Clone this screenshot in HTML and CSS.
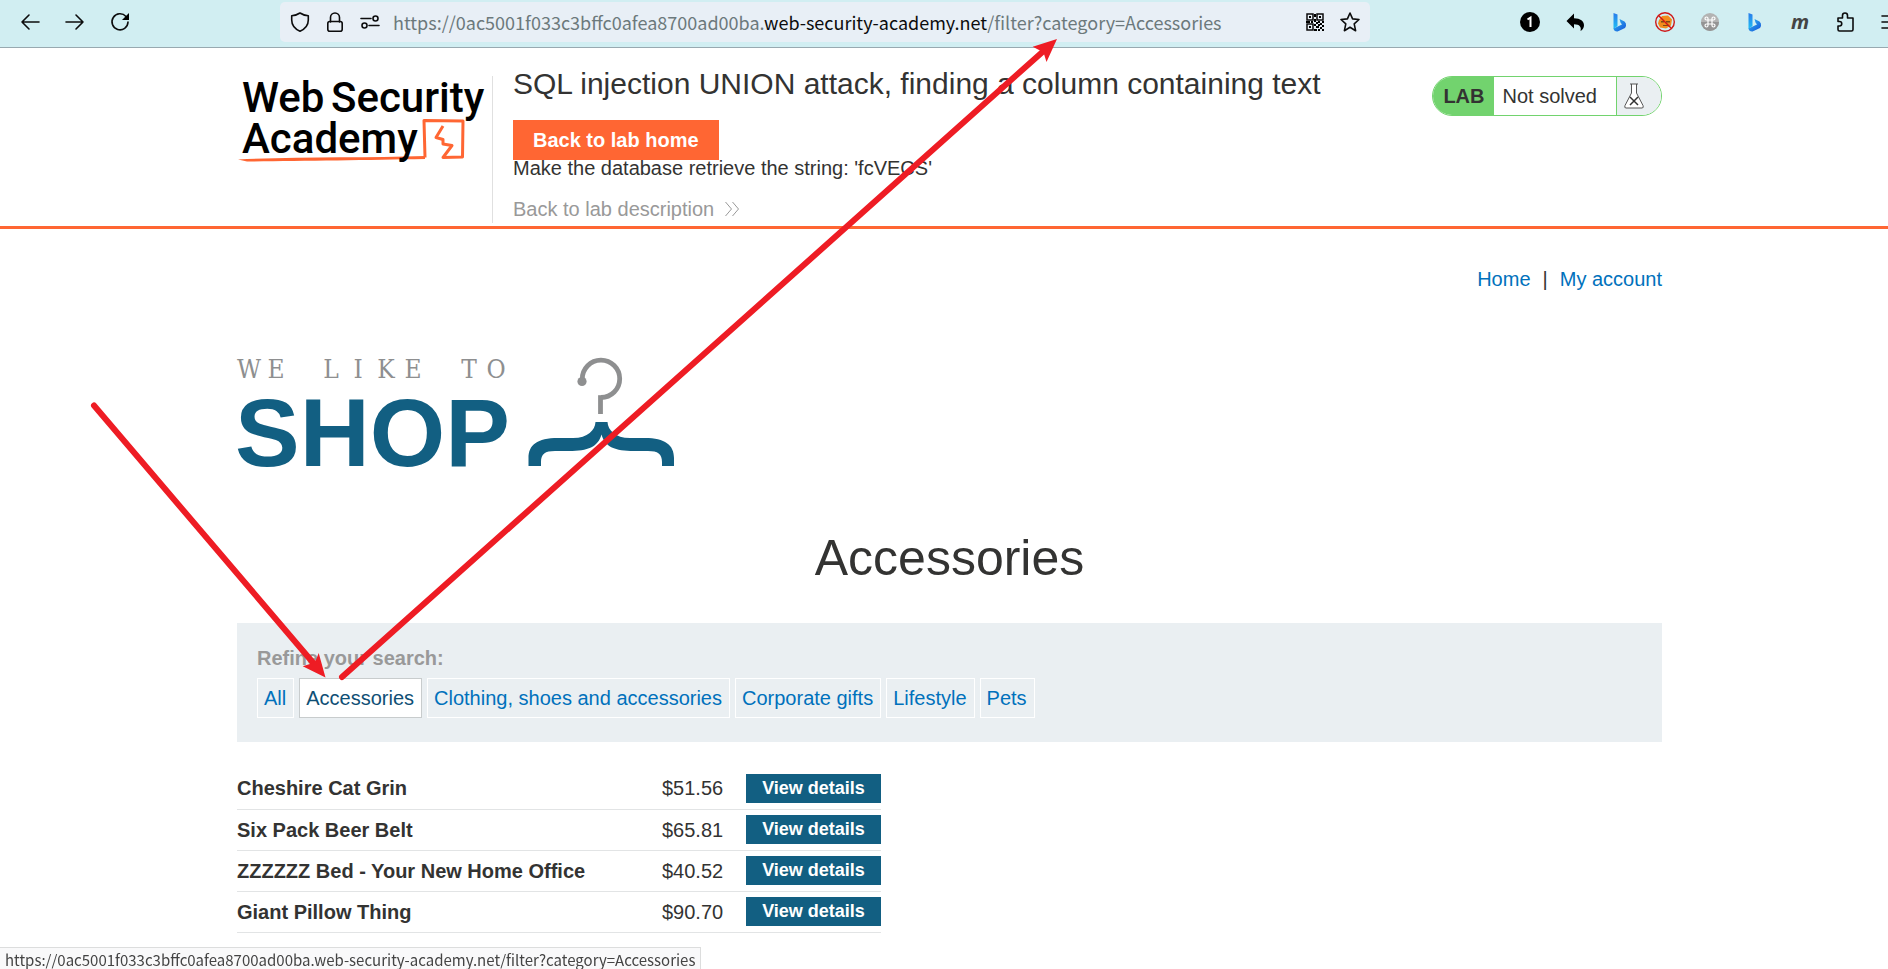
FILE: index.html
```html
<!DOCTYPE html>
<html lang="en">
<head>
<meta charset="utf-8">
<title>SQL injection UNION attack, finding a column containing text</title>
<link rel="stylesheet" href="styles.css">
</head>
<body>
<div class="toolbar">
  <div class="toolbar-nav">
    <button class="icon-button" type="button" aria-label="Back"><svg viewBox="0 0 20 20"><path class="line" d="M19 10H2M9 3L2 10l7 7"/></svg></button>
    <button class="icon-button" type="button" aria-label="Forward"><svg viewBox="0 0 20 20"><path class="line" d="M1 10h17M11 3l7 7-7 7"/></svg></button>
    <button class="icon-button" type="button" aria-label="Reload"><svg viewBox="0 0 20 20"><path class="line" d="M16 4.500A8 8 0 1 0 18 10"/><path d="M19 1v7h-7z"/></svg></button>
  </div>
  <div class="urlbar">
    <svg class="icon" viewBox="0 0 20 20"><path class="line" d="M10 1C12.500 2.700 15 3.600 18.300 3.800V8c0 5-3.300 9-8.300 11.200C5 17 1.700 13 1.700 8V3.800C5 3.600 7.500 2.700 10 1z"/></svg>
    <svg class="icon" viewBox="0 0 20 20"><path class="line" d="M5.500 10V5.500a4.500 4.500 0 0 1 9 0V10"/><rect class="line" x="2.800" y="9.500" width="14.400" height="9.700" rx="2"/></svg>
    <svg class="icon" viewBox="0 0 20 20"><path class="line" d="M1 6.500h10M9 13.500h10"/><circle class="line" cx="15.500" cy="6.500" r="2.500"/><circle class="line" cx="4.500" cy="13.500" r="2.500"/></svg>
    <div class="url" role="textbox" aria-label="Address" tabindex="0">https://0ac5001f033c3bffc0afea8700ad00ba.<span class="url-domain">web-security-academy.net</span>/filter?category=Accessories</div>
    <button class="icon-button" type="button" aria-label="QR code"><svg viewBox="0 0 20 20"><path class="qr" d="M2 2h6v6H2zM12 2h6v6h-6zM2 12h6v6H2z"/><path d="M4 4h2v2H4zM14 4h2v2h-2zM4 14h2v2H4zM9 2h2v3H9zM9 7h2v3H9zM1 9h4v2H1zM6 9h2v2H6zM13 9h2v2h-2zM17 9h2v2h-2zM9 12h2v2H9zM11 10h2v2h-2zM15 11h2v2h-2zM11 14h3v2h-3zM13 12h2v2h-2zM9 17h3v2H9zM15 15h2v2h-2zM17 13h2v2h-2zM13 17h2v2h-2zM17 17h2v2h-2z"/></svg></button>
    <button class="icon-button" type="button" aria-label="Bookmark this page"><svg viewBox="0 0 20 20"><path class="line" d="M10 1l2.600 5.900 6.400.600-4.800 4.400 1.400 6.800L10 15.300l-5.600 3.400 1.400-6.800L1 7.500l6.400-.600z"/></svg></button>
  </div>
  <div class="toolbar-extensions">
    <button class="icon-button" type="button" aria-label="Notifications"><svg viewBox="0 0 20 20"><circle cx="10" cy="10" r="10"/><path class="knockout" d="M7.500 7.500L10.500 5.500V15"/></svg></button>
    <button class="icon-button" type="button" aria-label="Undo"><svg viewBox="0 0 20 20"><path d="M9 1.500v4.700c6.500 0 10 3 10 7 0 2.300-1.200 4.400-3.500 5.800 1.200-4-.800-6.800-6.500-6.800v4.300L1.500 9z"/></svg></button>
    <button class="icon-button" type="button" aria-label="Bing"><svg viewBox="0 0 20 20"><use href="#bing"/></svg></button>
    <button class="icon-button" type="button" aria-label="Blocker"><svg viewBox="0 0 20 20"><path fill="#f28c1c" d="M4 8l3-4 6-.500 4 4-1 6-5 3-6-1-2-4z"/><path fill="#7a4b18" d="M6 9h3v1.500H6zM11 9h4v1.500h-4zM8 13h5v1H8z"/><circle class="forbid" cx="10" cy="10" r="9.300"/><path class="forbid" d="M3.500 3.500l13 13"/></svg></button>
    <button class="icon-button" type="button" aria-label="Shortcuts"><svg viewBox="0 0 20 20"><circle cx="10" cy="10" r="9" fill="#b3b3b3"/><path fill="#949494" d="M1 10a9 9 0 0 0 18 0z"/><path class="command" d="M8 8h4v4H8zM8 8H6.500A1.500 1.500 0 1 1 8 6.500zM12 8V6.500A1.500 1.500 0 1 1 13.500 8zM8 12v1.500A1.500 1.500 0 1 1 6.500 12zM12 12h1.500a1.500 1.500 0 1 1-1.500 1.500z"/></svg></button>
    <button class="icon-button" type="button" aria-label="Bing chat"><svg viewBox="0 0 20 20"><use href="#bing"/></svg></button>
    <button class="icon-button letter-m" type="button">m</button>
    <button class="icon-button" type="button" aria-label="Extensions"><svg viewBox="0 0 20 20"><path class="line" d="M3 6h4.500V3.500a2.500 2.500 0 0 1 5 0V6H18v11.500a1.500 1.500 0 0 1-1.500 1.500h-12A1.500 1.500 0 0 1 3 17.500V14h1.500a2 2 0 0 0 0-4.500H3z"/></svg></button>
    <button class="icon-button" type="button" aria-label="Menu"><svg viewBox="0 0 20 20"><path class="line" d="M2 4h16M2 10h16M2 16h16"/></svg></button>
  </div>
</div>

<header class="lab-header">
  <div class="container lab-row">
    <a class="academy" href="#" aria-label="Web Security Academy">
      <svg class="academy-logo" viewBox="0 0 250 90">
        <path class="scribble-fill" d="M1 83.500C60 80.500 130 82 188 80V83C130 84 60 85 10 85.500z"/>
        <path class="scribble" d="M188 81.500L187 44.500 226 45 225.500 81 206 81.500 215 69.500 206 68V63.500L199 61.500 206 50"/>
        <text class="academy-text" x="5" y="36">Web</text>
        <text class="academy-text" x="94" y="36">Security</text>
        <text class="academy-text" x="5" y="77">Academy</text>
      </svg>
    </a>
    <div class="lab-info">
      <h2 class="lab-title">SQL injection UNION attack, finding a column containing text</h2>
      <a class="lab-button" href="#">Back to lab home</a>
      <p class="lab-hint">Make the database retrieve the string: 'fcVECS'</p>
      <a class="lab-back" href="#">Back to lab description
        <svg class="chevrons" viewBox="0 0 16 16"><path d="M1.500 1l6 7-6 7M8.500 1l6 7-6 7"/></svg>
      </a>
    </div>
    <div class="lab-status">
      <span class="status-tag">LAB</span>
      <span class="status-text">Not solved</span>
      <span class="status-icon"><svg class="flask" viewBox="0 0 20 26"><path class="flask-body" d="M6 1h8M7.500 1v9L1 22.500q-1 2.500 1 2.500h16q2 0 1-2.500L12.500 10V1"/><path class="flask-x" d="M6 14l8 8M14 14l-8 8"/></svg></span>
    </div>
  </div>
</header>

<main class="shop">
  <div class="container">
    <nav class="top-links">
      <a href="#">Home</a><span>|</span><a href="#">My account</a>
    </nav>
    <svg class="shop-logo" viewBox="0 0 440 120" role="img" aria-label="We like to shop">
      <text class="tagline" x="12 39 94 121 149 176 232 259" y="28">WELIKETO</text>
      <text class="shop-word" x="-2" y="116">SHOP</text>
      <path class="hook" d="M345.300 29A18.700 18.700 0 1 1 364 47.500"/>
      <path class="hook" d="M363.500 45.200V64"/>
      <circle class="hook-ball" cx="345" cy="31.500" r="4.600"/>
      <path class="hanger" d="M358.500 72H370.500C371 80 378 88 393 88H408C428 88 437 95 437 108V116H425V112C425 104 421 101 411 101H397C378 101 368 97 364.500 84.500C361 97 351 101 332 101H318C308 101 304 104 304 112V116H291.500V108C291.500 95 300 88 321 88H336C351 88 358 80 358.500 72Z"/>
    </svg>
    <h1 class="category">Accessories</h1>
    <section class="filters">
      <p class="filters-label">Refine your search:</p>
      <div class="chips">
        <a class="chip" href="#">All</a>
        <a class="chip chip-active" href="#">Accessories</a>
        <a class="chip" href="#">Clothing, shoes and accessories</a>
        <a class="chip" href="#">Corporate gifts</a>
        <a class="chip" href="#">Lifestyle</a>
        <a class="chip" href="#">Pets</a>
      </div>
    </section>
    <table class="products">
      <tbody>
        <tr><th scope="row">Cheshire Cat Grin</th><td class="price">$51.56</td><td class="action"><a class="details" href="#">View details</a></td></tr>
        <tr><th scope="row">Six Pack Beer Belt</th><td class="price">$65.81</td><td class="action"><a class="details" href="#">View details</a></td></tr>
        <tr><th scope="row">ZZZZZZ Bed - Your New Home Office</th><td class="price">$40.52</td><td class="action"><a class="details" href="#">View details</a></td></tr>
        <tr><th scope="row">Giant Pillow Thing</th><td class="price">$90.70</td><td class="action"><a class="details" href="#">View details</a></td></tr>
      </tbody>
    </table>
  </div>
</main>

<div class="link-preview">https://0ac5001f033c3bffc0afea8700ad00ba.web-security-academy.net/filter?category=Accessories</div>

<svg class="annotations" aria-hidden="true">
  <path class="arrow" d="M94 405.500L315 665M342 677L1043 51.500"/>
  <path class="arrow-head" d="M325.500 677.500L302.700 666.300 311.500 663.500 316 660 318.700 653z"/>
  <path class="arrow-head" d="M1057 39L1032.700 46.700 1040 50.500 1044 54 1046.500 62z"/>
</svg>

<svg class="symbols" aria-hidden="true">
  <defs>
    <linearGradient id="bing-blue" x1="0" y1="0" x2="0" y2="1"><stop offset="0" stop-color="#2a7bea"/><stop offset="1" stop-color="#1fc0f5"/></linearGradient>
    <linearGradient id="bing-deep" x1="0" y1="0" x2="1" y2="1"><stop offset="0" stop-color="#32bdf4"/><stop offset="1" stop-color="#1450d8"/></linearGradient>
    <symbol id="bing" viewBox="0 0 20 20"><path fill="url(#bing-blue)" d="M3.500 1l4 1.500v11.500L3.500 17z"/><path fill="url(#bing-deep)" d="M9.500 7l5 2.500q2 1.500 1.500 4.500l-1 2-7.500 3.500q-3.500.200-4-3L12 12.500l-1.500-2z"/></symbol>
  </defs>
</svg>
</body>
</html>
```

FILE: styles.css
```css
* { box-sizing: border-box; }

body {
  position: relative;
  min-height: 100vh;
  margin: 0;
  overflow-x: hidden;
  background: #fff;
  color: #333332;
  font: 20px/24px "Liberation Sans", Arial, sans-serif;
}

a { color: #0071bc; text-decoration: none; }
h1, h2, p { margin: 0; font-weight: normal; }

/* Browser toolbar */
.toolbar {
  display: flex;
  align-items: flex-start;
  height: 48px;
  padding-top: 2px;
  overflow: hidden;
  background: #d1eef2;
  border-bottom: 1px solid #98a9b0;
}
.toolbar-nav { display: flex; align-items: center; gap: 25px; flex: 0 0 280px; height: 40px; padding-left: 20px; }
.urlbar {
  display: flex;
  align-items: center;
  gap: 15px;
  flex: 1;
  min-width: 0;
  height: 40px;
  padding: 0 10px;
  background: #e8eff6;
  border-radius: 5px;
}
.url {
  flex: 1;
  min-width: 0;
  margin-left: -2px;
  overflow: hidden;
  color: #6c797c;
  font: 18px/24px "Noto Sans CJK SC", "Open Sans", sans-serif;
  white-space: nowrap;
}
.url-domain { color: #0c0c0d; }
.toolbar-extensions { display: flex; align-items: center; gap: 25px; flex: 0 0 518px; height: 40px; padding-left: 150px; overflow: hidden; }
.icon-button { flex: none; width: 20px; height: 20px; padding: 0; background: none; border: 0; color: #0c0c0d; }
.icon, .icon-button svg { display: block; flex: none; width: 20px; height: 20px; }
.line { fill: none; stroke: #0c0c0d; stroke-width: 1.6; stroke-linecap: round; stroke-linejoin: round; }
.qr { fill: none; stroke: #0c0c0d; stroke-width: 1.5; }
.knockout { fill: none; stroke: #fff; stroke-width: 2; }
.forbid { fill: none; stroke: #cf1717; stroke-width: 1.4; }
.command { fill: none; stroke: #fff; stroke-width: 1.2; }
.letter-m { color: #444; font: italic bold 20px/18px "Open Sans", sans-serif; }
.symbols { position: absolute; width: 0; height: 0; }

/* Lab banner */
.container { max-width: 1425px; margin: 0 auto; }
.lab-header { padding: 16px 0 0 11px; border-bottom: 3px solid #ff6633; }
.lab-row { display: flex; align-items: stretch; }
.academy { flex: 0 0 256px; margin: 12px 0 3px; border-right: 1px solid #e0e0e0; }
.academy-logo { display: block; width: 250px; height: 90px; overflow: visible; }
.academy-text { fill: #000; font: 500 42px Roboto, sans-serif; }
.scribble { fill: none; stroke: #ff6633; stroke-width: 3; stroke-linejoin: round; }
.scribble-fill { fill: #ff6633; }
.lab-info { flex: 1; padding: 0 20px 5px; }
.lab-title { font-size: 30px; line-height: 40px; }
.lab-button {
  display: block;
  width: fit-content;
  margin-top: 16px;
  padding: 0 20px;
  background: #ff6633;
  color: #fff;
  font-weight: bold;
  line-height: 40px;
}
.lab-hint { line-height: 16px; }
.lab-back { display: flex; align-items: center; gap: 10px; margin-top: 21px; color: #999; }
.chevrons { width: 16px; height: 16px; fill: none; stroke: #999; }
.lab-status {
  display: flex;
  flex: none;
  height: 40px;
  margin-top: 12px;
  overflow: hidden;
  border: 1px solid #72d36e;
  border-radius: 20px;
  line-height: 38px;
}
.status-tag { padding: 0 9px 0 10px; background: #72d36e; font-weight: bold; }
.status-text { padding: 0 19px 0 9px; border-right: 1px solid #72d36e; }
.status-icon { display: flex; align-items: center; width: 44px; padding-left: 7px; background: #eaeff2; }
.flask { width: 20px; height: 26px; }
.flask-body { fill: #fff; stroke: #555; }
.flask-x { fill: none; stroke: #333; stroke-width: 1.5; }

/* Shop page */
.shop { padding: 38px 0 0 11px; }
.top-links { display: flex; justify-content: flex-end; gap: 12px; }
.shop-logo { display: block; width: 440px; height: 120px; margin-top: 59px; overflow: visible; }
.tagline { fill: #8e8f90; font: 26px "DejaVu Serif Condensed", "DejaVu Serif", serif; text-anchor: middle; }
.shop-word { fill: #125f82; font: bold 97px "Liberation Sans", Arial, sans-serif; }
.hook { fill: none; stroke: #8e8f90; stroke-width: 4.8; }
.hook-ball { fill: #8e8f90; }
.hanger { fill: #125f82; }
.category { margin-top: 58px; font-size: 50px; line-height: 60px; text-align: center; }
.filters { margin-top: 35px; padding: 23px 20px 24px; background: #eaeff2; }
.filters-label { color: #999; font-weight: bold; }
.chips { display: flex; flex-wrap: wrap; gap: 5px; margin-top: 8px; }
.chip { padding: 0 7px 0 6px; border: 1px solid #fff; line-height: 38px; }
.chip-active { background: #fff; border-color: #c8cccd; color: #0f4f75; }
.products { width: 644px; margin-top: 26px; border-collapse: collapse; }
.products th, .products td { height: 41px; padding: 0; border-bottom: 1px solid #e2e4e5; text-align: left; }
.products .price { width: 84px; }
.products .action { width: 135px; }
.details { display: block; background: #125f82; color: #fff; font-size: 18px; font-weight: bold; line-height: 29px; text-align: center; }

/* Overlays */
.link-preview {
  position: fixed;
  bottom: 0;
  left: 0;
  height: 22px;
  padding: 0 5px;
  background: #f9f9fa;
  border: 1px solid #dcdddd;
  border-width: 1px 1px 0 0;
  color: #444;
  font: 15px/24px "Noto Sans CJK SC", "Open Sans", sans-serif;
  white-space: nowrap;
}
.annotations { position: absolute; top: 0; left: 0; width: 100%; height: 100%; pointer-events: none; }
.arrow { fill: none; stroke: #ee1c24; stroke-width: 6; stroke-linecap: round; }
.arrow-head { fill: #ee1c24; }
```
